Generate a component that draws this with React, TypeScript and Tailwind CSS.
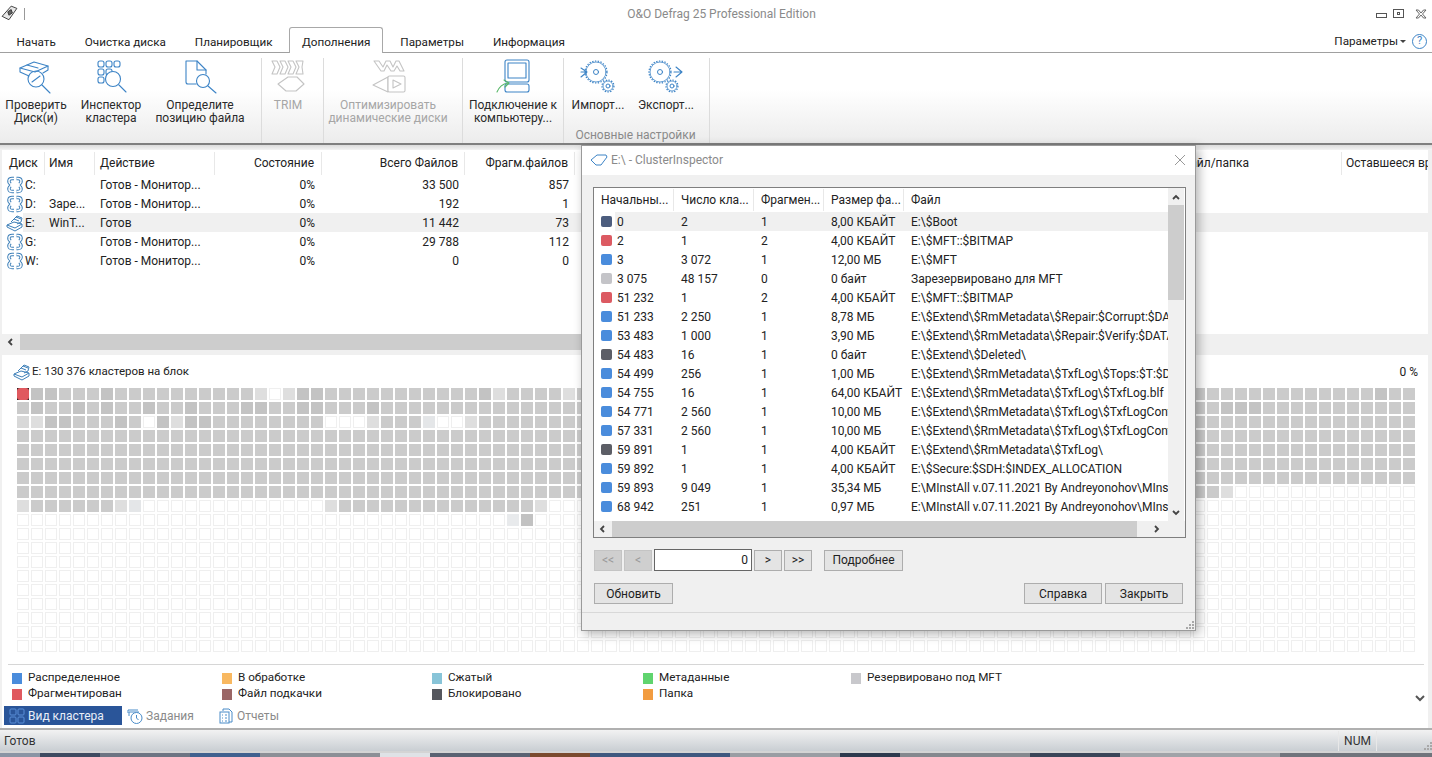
import type { ReactNode } from 'react'

const BLUE = '#3d84c6'

const TABS = ['Начать', 'Очистка диска', 'Планировщик', 'Дополнения', 'Параметры', 'Информация']

const DRIVES = [
  { disk: 'C:', name: '', action: 'Готов - Монитор...', state: '0%', total: '33 500', frag: '857' },
  { disk: 'D:', name: 'Заре...', action: 'Готов - Монитор...', state: '0%', total: '192', frag: '1' },
  { disk: 'E:', name: 'WinT...', action: 'Готов', state: '0%', total: '11 442', frag: '73', selected: true },
  { disk: 'G:', name: '', action: 'Готов - Монитор...', state: '0%', total: '29 788', frag: '112' },
  { disk: 'W:', name: '', action: 'Готов - Монитор...', state: '0%', total: '0', frag: '0' },
]

const CLUSTERS = [
  { c: 'bg-[#4c5d7e]', start: '0', count: '2', frag: '1', size: '8,00 КБАЙТ', file: 'E:\\$Boot' },
  { c: 'bg-[#dc5a62]', start: '2', count: '1', frag: '2', size: '4,00 КБАЙТ', file: 'E:\\$MFT::$BITMAP' },
  { c: 'bg-[#4a8cdc]', start: '3', count: '3 072', frag: '1', size: '12,00 МБ', file: 'E:\\$MFT' },
  { c: 'bg-[#c4c4c8]', start: '3 075', count: '48 157', frag: '0', size: '0 байт', file: 'Зарезервировано для MFT' },
  { c: 'bg-[#dc5a62]', start: '51 232', count: '1', frag: '2', size: '4,00 КБАЙТ', file: 'E:\\$MFT::$BITMAP' },
  { c: 'bg-[#4a8cdc]', start: '51 233', count: '2 250', frag: '1', size: '8,78 МБ', file: 'E:\\$Extend\\$RmMetadata\\$Repair:$Corrupt:$DATA' },
  { c: 'bg-[#4a8cdc]', start: '53 483', count: '1 000', frag: '1', size: '3,90 МБ', file: 'E:\\$Extend\\$RmMetadata\\$Repair:$Verify:$DATA' },
  { c: 'bg-[#5c5e66]', start: '54 483', count: '16', frag: '1', size: '0 байт', file: 'E:\\$Extend\\$Deleted\\' },
  { c: 'bg-[#4a8cdc]', start: '54 499', count: '256', frag: '1', size: '1,00 МБ', file: 'E:\\$Extend\\$RmMetadata\\$TxfLog\\$Tops:$T:$DATA' },
  { c: 'bg-[#4a8cdc]', start: '54 755', count: '16', frag: '1', size: '64,00 КБАЙТ', file: 'E:\\$Extend\\$RmMetadata\\$TxfLog\\$TxfLog.blf' },
  { c: 'bg-[#4a8cdc]', start: '54 771', count: '2 560', frag: '1', size: '10,00 МБ', file: 'E:\\$Extend\\$RmMetadata\\$TxfLog\\$TxfLogContainer00' },
  { c: 'bg-[#4a8cdc]', start: '57 331', count: '2 560', frag: '1', size: '10,00 МБ', file: 'E:\\$Extend\\$RmMetadata\\$TxfLog\\$TxfLogContainer00' },
  { c: 'bg-[#5c5e66]', start: '59 891', count: '1', frag: '1', size: '4,00 КБАЙТ', file: 'E:\\$Extend\\$RmMetadata\\$TxfLog\\' },
  { c: 'bg-[#4a8cdc]', start: '59 892', count: '1', frag: '1', size: '4,00 КБАЙТ', file: 'E:\\$Secure:$SDH:$INDEX_ALLOCATION' },
  { c: 'bg-[#4a8cdc]', start: '59 893', count: '9 049', frag: '1', size: '35,34 МБ', file: 'E:\\MInstAll v.07.11.2021 By Andreyonohov\\MInstAll\\x' },
  { c: 'bg-[#4a8cdc]', start: '68 942', count: '251', frag: '1', size: '0,97 МБ', file: 'E:\\MInstAll v.07.11.2021 By Andreyonohov\\MInstAll\\y' },
]

const LEGEND = [
  { w: 'w-[210px]', items: [['Распределенное', 'bg-[#4a8cdc]'], ['Фрагментирован', 'bg-[#e0595f]']] },
  { w: 'w-[210px]', items: [['В обработке', 'bg-[#f8b860]'], ['Файл подкачки', 'bg-[#9a6666]']] },
  { w: 'w-[211px]', items: [['Сжатый', 'bg-[#88c4d8]'], ['Блокировано', 'bg-[#55575e]']] },
  { w: 'w-[208px]', items: [['Метаданные', 'bg-[#60d46e]'], ['Папка', 'bg-[#f29c40]']] },
  { w: 'w-[200px]', items: [['Резервировано под MFT', 'bg-[#c8c8cc]']] },
]

const WALLPAPER = [
  'w-[40px] bg-[#8a94a4]', 'w-[60px] bg-[#3e4a60]', 'w-[90px] bg-[#6d7482]', 'w-[70px] bg-[#41618f]',
  'w-[120px] bg-[#8c8f96]', 'w-[50px] bg-[#dfe2e6]', 'w-[100px] bg-[#5a6272]', 'w-[60px] bg-[#7b4a2e]',
  'w-[140px] bg-[#3f587f]', 'w-[110px] bg-[#9a9da3]', 'w-[60px] bg-[#2e3a4e]', 'w-[130px] bg-[#85888e]',
  'w-[90px] bg-[#3a4558]', 'w-[160px] bg-[#a0a3a8]', 'w-[152px] bg-[#70747c]',
]

const DARK: Record<number, number[]> = {
  0: [1, 2, 6, 20, 21, 33, 97],
  1: [1, 4, 6, 9, 12, 16, 17, 20, 21, 25, 86, 87, 88],
  2: [2, 3, 7, 10, 12, 13],
}
const DOTTED: Record<number, number[]> = {
  0: [17, 19, 34, 39],
  2: [1, 11, 25, 32],
  7: [86],
  8: [0, 7, 22, 37],
}
const BLANK: Record<number, number[]> = {
  0: [18],
  2: [9, 22, 23, 24, 30, 31],
}

function cellClass(r: number, c: number) {
  const base = 'h-[12px] w-[12px] '
  if (r === 2 && c === 0) return base + 'bg-[#d8d8d8]'
  if (r === 2 && c === 29) return base + 'bg-[#e4e6e8]'
  if (r === 8 && c === 8) return base + 'bg-[#e4e6e8]'
  if (r === 9 && c === 35) return base + 'bg-[#e8eaec]'
  if (r === 9 && c === 36) return base + 'bg-[#c2c2c2]'
  if (DOTTED[r]?.includes(c)) return base + 'bg-[#dedede]'
  if (BLANK[r]?.includes(c)) return base + 'border border-[#efefef] bg-white'
  const filled =
    r < 7 || (r === 7 && c <= 85) || (r === 8 && ((c >= 1 && c <= 6) || (c >= 23 && c <= 36)))
  if (!filled) return base + 'border border-[#efefef] bg-white'
  if (DARK[r]?.includes(c)) return base + 'bg-[#c3c3c3]'
  return base + 'bg-[#cbcbcb]'
}

function ClusterMap() {
  const cells = []
  for (let r = 0; r < 19; r++) {
    for (let c = 0; c < 100; c++) {
      if (r === 0 && c === 0) {
        cells.push(
          <div key="first" className="h-[12px] w-[12px] bg-[#222]">
            <div className="h-full w-full rounded-[3px] bg-[#e0595f]" />
          </div>,
        )
      } else {
        cells.push(<div key={`${r}-${c}`} className={cellClass(r, c)} />)
      }
    }
  }
  return <div className="ml-[15px] grid grid-cols-[repeat(100,12px)] gap-[2px]">{cells}</div>
}

function Icon({ size = 36, children, color = BLUE }: { size?: number; children: ReactNode; color?: string }) {
  return (
    <svg width={size} height={size} viewBox="0 0 36 36" fill="none" stroke={color} strokeWidth="1.1" strokeLinejoin="round" strokeLinecap="round">
      {children}
    </svg>
  )
}

function CheckDiskIcon() {
  return (
    <Icon>
      <path d="M2 9L16 3l14 4-13 6z" />
      <path d="M2 9v4l9 4M30 7v4l-5 3" />
      <path d="M9 6l11 3" />
      <circle cx="18" cy="20" r="8" />
      <path d="M14 23l8-6M24 26l8 8" />
    </Icon>
  )
}

function InspectorIcon() {
  return (
    <Icon>
      <rect x="5" y="2" width="6" height="6" rx="2" />
      <rect x="13" y="2" width="6" height="6" rx="2" />
      <rect x="21" y="2" width="6" height="6" rx="2" />
      <rect x="5" y="10" width="6" height="6" rx="2" />
      <rect x="13" y="10" width="6" height="6" rx="2" />
      <rect x="5" y="18" width="6" height="6" rx="2" />
      <circle cx="20" cy="20" r="7.5" fill="#fff" />
      <path d="M26 26l7 7" />
    </Icon>
  )
}

function LocateIcon() {
  return (
    <Icon>
      <path d="M4 2h11l9 9v4M4 2v21a2 2 0 0 0 2 2h8" />
      <path d="M15 2v9h9" />
      <circle cx="21" cy="22" r="6.5" />
      <path d="M26 27l8 7" />
    </Icon>
  )
}

function TrimIcon() {
  return (
    <Icon color="#c4c4c4">
      <path d="M2 2h5l3 6-3 7H2l3-7z" />
      <path d="M10 2h5l3 6-3 7h-5l3-7z" />
      <path d="M18 2h5l3 6-3 7h-5l3-7z" />
      <path d="M26 2h7l-1 6 1 7h-7l3-7z" />
      <path d="M8 25l10-7h9l7 7-8 7H16z" />
    </Icon>
  )
}

function VmIcon() {
  return (
    <Icon color="#c4c4c4">
      <path d="M4 2h5l4 6 3-6h4l3 6 3-6h3l5 10h-4l-3-5-3 5h-3l-4-6-3 6h-3z" />
      <path d="M3 26l15-8v15z" />
      <rect x="18" y="17" width="17" height="16" rx="1.5" fill="#fff" />
      <path d="M23 21l8 4-8 4z" />
    </Icon>
  )
}

function ConnectIcon() {
  return (
    <Icon>
      <rect x="10" y="1" width="24" height="22" rx="2" />
      <rect x="13" y="4" width="18" height="15" />
      <rect x="10" y="25" width="24" height="8" rx="2" />
      <path d="M2 33c2-5 5-8 11-9" stroke="#58b868" />
      <path d="M9 21l5 3-4 4" stroke="#58b868" />
    </Icon>
  )
}

function Gear({ cx, cy, r, hole }: { cx: number; cy: number; r: number; hole: number }) {
  return (
    <>
      <circle cx={cx} cy={cy} r={r} strokeDasharray="1.4 1.4" strokeWidth="1.2" strokeLinecap="butt" />
      <circle cx={cx} cy={cy} r={r - 1} strokeWidth="0.8" />
      <circle cx={cx} cy={cy} r={hole} strokeWidth="1" />
    </>
  )
}

function ImportIcon() {
  return (
    <Icon>
      <Gear cx={16} cy={13} r={11} hole={2.5} />
      <circle cx={28} cy={27} r={6.5} fill="#fff" stroke="none" />
      <Gear cx={28} cy={27} r={6} hole={2} />
      <path d="M1 9l6 4-6 5M1 13h5" />
    </Icon>
  )
}

function ExportIcon() {
  return (
    <Icon>
      <Gear cx={12} cy={13} r={11} hole={2.5} />
      <circle cx={24} cy={27} r={6.5} fill="#fff" stroke="none" />
      <Gear cx={24} cy={27} r={6} hole={2} />
      <path d="M28 8l6 5-6 5M26 13h7" />
    </Icon>
  )
}

function DriveArrows() {
  const arcs = ['M4.500 8 C2 6 2.500 2.500 6 2.500 L8 2.500', 'M13.500 8 C16 6 15.500 2.500 12 2.500 L10.500 2.500', 'M4.500 10 C2 12 2.500 15.500 6 15.500 L8 15.500', 'M13.500 10 C16 12 15.500 15.500 12 15.500 L10.500 15.500']
  return (
    <svg width="18" height="18" viewBox="0 0 18 18" fill="none">
      {arcs.map((d) => (
        <path key={d} d={d} stroke="#3d7fb8" strokeWidth="3.400" />
      ))}
      {arcs.map((d) => (
        <path key={d} d={d} stroke="#fff" strokeWidth="1.500" />
      ))}
    </svg>
  )
}

function DiskStack({ size = 18 }: { size?: number }) {
  return (
    <svg width={size} height={size} viewBox="0 0 18 18" fill="none" stroke="#3d7fb8" strokeWidth="1" strokeLinejoin="round">
      <path d="M1 11l7-3 8 2-7 4z" />
      <path d="M1 11v2l8 4 7-4v-3" />
      <path d="M5 8l6-6 5 2-1 4-4 2" />
      <path d="M8 5l5 2M10 3l5 2" />
    </svg>
  )
}

function RibbonItem({ width, icon, lines, disabled }: { width: string; icon: ReactNode; lines: string[]; disabled?: boolean }) {
  return (
    <div className={`flex flex-col items-center ${width}`}>
      <div className="flex h-[38px] items-center">{icon}</div>
      <div className={`mt-[3px] text-center leading-[13px] ${disabled ? 'text-[#a6a6a6]' : 'text-[#2a2a2a]'}`}>
        {lines.map((l) => (
          <div key={l} className="whitespace-nowrap">{l}</div>
        ))}
      </div>
    </div>
  )
}

function Btn({ width, children, disabled }: { width: string; children: ReactNode; disabled?: boolean }) {
  return (
    <div
      className={`flex h-[21px] items-center justify-center border ${width} ${
        disabled ? 'border-[#c4c4c4] bg-[#cfcfcf] text-[#9a9a9a]' : 'border-[#adadad] bg-[#e4e4e4] text-[#222]'
      }`}
    >
      {children}
    </div>
  )
}

function ScrollArrow({ d }: { d: string }) {
  return (
    <svg width="10" height="10" viewBox="0 0 10 10" fill="none" stroke="#444" strokeWidth="1.8">
      <path d={d} />
    </svg>
  )
}

function Grip() {
  return (
    <svg width="9" height="9" viewBox="0 0 9 9" fill="#a8a8a8">
      <rect x="7" y="1" width="2" height="2" />
      <rect x="4" y="4" width="2" height="2" />
      <rect x="7" y="4" width="2" height="2" />
      <rect x="1" y="7" width="2" height="2" />
      <rect x="4" y="7" width="2" height="2" />
      <rect x="7" y="7" width="2" height="2" />
    </svg>
  )
}

const MAIN_COLS = 'grid grid-cols-[43px_50px_120px_107px_143px_110px_767px_88px]'
const DLG_COLS = 'grid grid-cols-[80px_80px_70px_80px_1fr]'

function ClusterDialog() {
  return (
    <div className="absolute left-[581px] top-[145px] flex h-[486px] w-[615px] flex-col border border-[#9a9a9a] bg-[#f0f0f0] shadow-[3px_3px_10px_rgba(0,0,0,0.3)]">
      <div className="flex h-[29px] shrink-0 items-center bg-white pb-[2px] pl-[8px] pr-[9px] text-[#8a8a8a]">
        <svg width="18" height="12" viewBox="0 0 18 12" fill="none" stroke="#3d84c6" strokeWidth="1">
          <path d="M1 6l6-5h9l1 2-6 8H6z" />
        </svg>
        <span className="ml-[3px] flex-1 text-[12px]">E:\ - ClusterInspector</span>
        <svg width="12" height="12" viewBox="0 0 12 12" stroke="#999" strokeWidth="1">
          <path d="M1 1l10 10M11 1L1 11" />
        </svg>
      </div>
      <div className="ml-[11px] mt-[12px] flex h-[351px] w-[593px] shrink-0 flex-col border border-[#7f7f7f] bg-white">
        <div className="flex min-h-0 flex-1">
          <div className="w-[574px] shrink-0 overflow-hidden">
            <div className={`${DLG_COLS} h-[24px] items-center text-[#222]`}>
              {['Начальны...', 'Число кла...', 'Фрагмен...', 'Размер фа...', 'Файл'].map((h, i) => (
                <div key={h} className={`flex h-[22px] items-center whitespace-nowrap pl-[7px] ${i < 4 ? 'border-r border-[#e8e8e8]' : ''}`}>
                  {h}
                </div>
              ))}
            </div>
            {CLUSTERS.map((row, i) => (
              <div key={row.start} className={`${DLG_COLS} relative h-[19px] items-center whitespace-nowrap text-[#222]`}>
                {i === 0 && <div className="absolute bottom-0 left-[21px] right-0 top-0 bg-[#f0f0f0]" />}
                <div className="relative flex items-center pl-[7px]">
                  <span className={`mr-[5px] h-[11px] w-[11px] rounded-[2px] ${row.c}`} />
                  {row.start}
                </div>
                <div className="relative pl-[7px]">{row.count}</div>
                <div className="relative pl-[7px]">{row.frag}</div>
                <div className="relative pl-[7px]">{row.size}</div>
                <div className="relative overflow-hidden pl-[7px]">{row.file}</div>
              </div>
            ))}
          </div>
          <div className="flex w-[16px] flex-col items-center bg-[#f0f0f0]">
            <div className="flex h-[17px] items-center"><ScrollArrow d="M2 7l3-3 3 3" /></div>
            <div className="h-[95px] w-full bg-[#cdcdcd]" />
            <div className="flex-1" />
            <div className="flex h-[17px] items-center"><ScrollArrow d="M2 3l3 3 3-3" /></div>
          </div>
        </div>
        <div className="flex h-[16px] shrink-0 items-center bg-[#f0f0f0] pr-[24px]">
          <div className="flex w-[18px] justify-center"><ScrollArrow d="M6 2L3 5l3 3" /></div>
          <div className="h-full w-[525px] bg-[#cdcdcd]" />
          <div className="flex-1" />
          <ScrollArrow d="M4 2l3 3-3 3" />
        </div>
      </div>
      <div className="ml-[12px] mt-[11px] flex items-center gap-[2px]">
        <Btn width="w-[28px]" disabled>&lt;&lt;</Btn>
        <Btn width="w-[28px]" disabled>&lt;</Btn>
        <div className="flex h-[22px] w-[98px] items-center justify-end border border-[#666] bg-white pr-[3px] text-[#222]">0</div>
        <Btn width="w-[28px]">&gt;</Btn>
        <Btn width="w-[28px]">&gt;&gt;</Btn>
        <div className="ml-[10px]"><Btn width="w-[79px]">Подробнее</Btn></div>
      </div>
      <div className="ml-[12px] mr-[12px] mt-[12px] flex items-center">
        <Btn width="w-[79px]">Обновить</Btn>
        <div className="flex-1" />
        <Btn width="w-[78px]">Справка</Btn>
        <div className="ml-[3px]"><Btn width="w-[78px]">Закрыть</Btn></div>
      </div>
      <div className="mt-[8px] flex flex-1 items-end justify-end border-t border-[#d8d8d8] pb-[1px] pr-[1px]">
        <Grip />
      </div>
    </div>
  )
}

export default function App() {
  return (
    <div className="relative flex h-[757px] w-[1432px] flex-col overflow-hidden bg-[#f0f0f0] font-['Roboto',sans-serif] text-[12px] text-[#222]">
      {/* заголовок окна */}
      <div className="flex h-[27px] shrink-0 items-center bg-white pl-[1px]">
        <svg width="17" height="17" viewBox="0 0 15 15" fill="#666" stroke="#333" strokeWidth="0.8">
          <path d="M1 10l8-9 5 2-7 10z" fill="#e8e8e8" />
          <path d="M6 6l3-2 1 3-3 2z" />
        </svg>
        <div className="ml-[6px] h-[12px] w-px bg-[#999]" />
        <div className="flex-1 pl-[42px] text-center text-[#8a8a8a]">O&amp;O Defrag 25 Professional Edition</div>
        <div className="flex items-center gap-[6px] pr-[5px]">
          <div className="mt-[3px] h-[5px] w-[11px] border border-[#555]" />
          <div className="flex h-[9px] w-[11px] items-center justify-center border border-[#555]"><div className="h-[3px] w-[3px] border border-[#555]" /></div>
          <svg className="ml-[5px]" width="12" height="10" viewBox="0 0 12 10" stroke="#666" fill="none"><path d="M1 1h2.500L6 4l2.500-3H11L7.500 5 11 9H8.500L6 6 3.500 9H1l3.500-4z" /></svg>
        </div>
      </div>

      {/* вкладки */}
      <div className="flex h-[26px] shrink-0 items-end border-b border-[#a0a0a0] bg-white pl-[2px] text-[11.700px]">
        {TABS.map((t) => (
          <div
            key={t}
            className={
              t === 'Дополнения'
                ? 'relative -mb-px ml-[2px] mr-[2.500px] flex h-[26px] items-center rounded-t-[3px] border border-b-0 border-[#a8a8a8] bg-white px-[12px] pt-[5px]'
                : 'flex h-[25px] items-center px-[14.500px] pt-[6px]'
            }
          >
            {t}
          </div>
        ))}
        <div className="flex-1" />
        <div className="mb-[1px] flex items-center pr-[5px]">
          <span className="pt-[2px]">Параметры</span>
          <span className="ml-[2px] mr-[6px] h-0 w-0 border-x-[3px] border-t-[3px] border-x-transparent border-t-[#444]" />
          <span className="flex h-[15px] w-[15px] items-center justify-center rounded-full border-[1.5px] border-[#3d84c6] text-[11px] text-[#3d84c6]">?</span>
        </div>
      </div>

      {/* лента */}
      <div className="flex h-[92px] shrink-0 border-b-2 border-[#808080] bg-gradient-to-b from-white from-40% to-[#ececec]">
        <div className="mt-[5px] flex w-[262px] border-r border-[#dcdcdc]">
          <RibbonItem width="w-[72px]" icon={<CheckDiskIcon />} lines={['Проверить', 'Диск(и)']} />
          <RibbonItem width="w-[78px]" icon={<InspectorIcon />} lines={['Инспектор', 'кластера']} />
          <RibbonItem width="w-[100px]" icon={<LocateIcon />} lines={['Определите', 'позицию файла']} />
        </div>
        <div className="mt-[5px] flex w-[62px] border-r border-[#dcdcdc]">
          <RibbonItem width="w-[52px]" icon={<TrimIcon />} lines={['TRIM']} disabled />
        </div>
        <div className="mt-[5px] flex w-[139px] border-r border-[#dcdcdc]">
          <RibbonItem width="w-[128px]" icon={<VmIcon />} lines={['Оптимизировать', 'динамические диски']} disabled />
        </div>
        <div className="mt-[5px] flex w-[101px] border-r border-[#dcdcdc]">
          <RibbonItem width="w-[100px]" icon={<ConnectIcon />} lines={['Подключение к', 'компьютеру...']} />
        </div>
        <div className="mt-[5px] flex w-[146px] flex-col border-r border-[#dcdcdc]">
          <div className="flex flex-1">
            <RibbonItem width="w-[68px]" icon={<ImportIcon />} lines={['Импорт...']} />
            <RibbonItem width="w-[68px]" icon={<ExportIcon />} lines={['Экспорт...']} />
          </div>
          <div className="-mb-px pr-[2px] text-center text-[#8a8a8a]">Основные настройки</div>
        </div>
      </div>

      <div className="h-[5px] shrink-0 bg-gradient-to-b from-[#dcdcdc] to-[#f4f4f4]" />

      {/* список дисков */}
      <div className="ml-[2px] mr-[4px] flex h-[200px] shrink-0 flex-col overflow-hidden bg-white">
        <div className={`${MAIN_COLS} h-[25px] items-end`}>
          {[
            ['Диск', 'pl-[7px]'],
            ['Имя', 'pl-[4px]'],
            ['Действие', 'pl-[5px]'],
            ['Состояние', 'justify-end pr-[7px]'],
            ['Всего Файлов', 'justify-end pr-[6px]'],
            ['Фрагм.файлов', 'justify-end pr-[6px]'],
            ['Текущий файл/папка', 'justify-end pr-[92px]'],
            ['Оставшееся время', 'pl-[4px]'],
          ].map(([h, cls], i) => (
            <div key={h} className={`flex h-[23px] items-center overflow-hidden whitespace-nowrap pb-[2px] ${cls} ${i < 7 ? 'border-r border-[#e8e8e8]' : ''}`}>
              {h}
            </div>
          ))}
        </div>
        {DRIVES.map((d) => (
          <div key={d.disk} className={`${MAIN_COLS} relative h-[19px] items-center whitespace-nowrap`}>
            {d.selected && <div className="absolute bottom-0 left-[21px] right-0 top-0 bg-[#f0f0f0]" />}
            <div className="relative flex items-center pl-[4px]">
              {d.selected ? <DiskStack /> : <DriveArrows />}
              <span className="ml-px">{d.disk}</span>
            </div>
            <div className="relative pl-[4px]">{d.name}</div>
            <div className="relative pl-[5px]">{d.action}</div>
            <div className="relative pr-[7px] text-right">{d.state}</div>
            <div className="relative pr-[6px] text-right">{d.total}</div>
            <div className="relative pr-[6px] text-right">{d.frag}</div>
          </div>
        ))}
        <div className="flex-1" />
        <div className="flex h-[16px] shrink-0 items-center bg-[#f0f0f0]">
          <div className="flex w-[18px] justify-center"><ScrollArrow d="M6 2L3 5l3 3" /></div>
          <div className="h-full w-[1100px] bg-[#cdcdcd]" />
        </div>
      </div>

      <div className="h-[5px] shrink-0" />

      {/* карта кластеров */}
      <div className="ml-[2px] mr-[4px] flex h-[373px] shrink-0 flex-col bg-white">
        <div className="flex h-[33px] shrink-0 items-center justify-between pl-[11px] pr-[10px]">
          <div className="flex items-center">
            <DiskStack />
            <span className="ml-px text-[11.500px]">E: 130 376 кластеров на блок</span>
          </div>
          <span>0 %</span>
        </div>
        <ClusterMap />
        <div className="ml-[6px] mr-[4px] mt-[12px] h-px shrink-0 bg-[#d6d6d6]" />
        <div className="relative mt-[5px] flex pl-[10px] text-[11.700px]">
          {LEGEND.map((col) => (
            <div key={col.items[0][0]} className={`${col.w} flex flex-col`}>
              {col.items.map(([label, c]) => (
                <div key={label} className="flex h-[16px] items-center">
                  <span className={`mr-[6px] h-[11px] w-[10px] ${c}`} />
                  <span className="whitespace-nowrap">{label}</span>
                </div>
              ))}
            </div>
          ))}
          <svg className="absolute right-[3px] top-[24px]" width="10" height="8" viewBox="0 0 10 8" fill="none" stroke="#555" strokeWidth="2">
            <path d="M1 2l4 4 4-4" />
          </svg>
        </div>
        <div className="mt-[4px] flex h-[19px] items-center pl-[2px] text-[#8a8a8a]">
          <div className="flex h-full w-[118px] items-center bg-[#2a5599] pl-[5px] text-[#e8eef8]">
            <svg width="16" height="16" viewBox="0 0 16 16" fill="none" stroke="#5a90d8">
              <rect x="1" y="1" width="6" height="6" rx="1" />
              <rect x="9" y="1" width="6" height="6" rx="1" />
              <rect x="1" y="9" width="6" height="6" rx="1" />
              <rect x="9" y="9" width="6" height="6" rx="1" />
            </svg>
            <span className="ml-[3px]">Вид кластера</span>
          </div>
          <div className="ml-[5px] flex w-[91px] items-center">
            <svg width="16" height="16" viewBox="0 0 16 16" fill="none" stroke="#4a8cc8">
              <path d="M1 5V2h10M2 8V4h10" />
              <circle cx="9.500" cy="10" r="5.500" fill="#fff" />
              <path d="M9.500 7v3l2 2" />
            </svg>
            <span className="ml-[3px]">Задания</span>
          </div>
          <div className="flex items-center">
            <svg width="16" height="16" viewBox="0 0 16 16" fill="none" stroke="#4a8cc8">
              <path d="M5 3V1h6l3 3v10h-3" />
              <rect x="2" y="4" width="9" height="11" />
              <path d="M4 7h1M7 7h2M4 10h1M7 10h2M4 13h1M7 13h2" />
            </svg>
            <span className="ml-[3px]">Отчеты</span>
          </div>
        </div>
      </div>

      {/* статус */}
      <div className="flex h-[23px] shrink-0 items-center border-t-2 border-[#b0b0b0] bg-gradient-to-b from-[#f2f2f2] to-[#c9ced3] pl-[4px] text-[#333]">
        <span className="flex-1">Готов</span>
        <div className="flex h-[20px] w-[39px] items-center justify-center border-x border-[#e8e8e8]">NUM</div>
        <div className="flex h-full w-[55px] items-end justify-end pb-[1px]"><Grip /></div>
      </div>

      <div className="flex h-[6px] shrink-0 border-t-2 border-[#d4d4d4]">
        {WALLPAPER.map((c) => (
          <div key={c} className={c} />
        ))}
      </div>

      <ClusterDialog />
    </div>
  )
}
